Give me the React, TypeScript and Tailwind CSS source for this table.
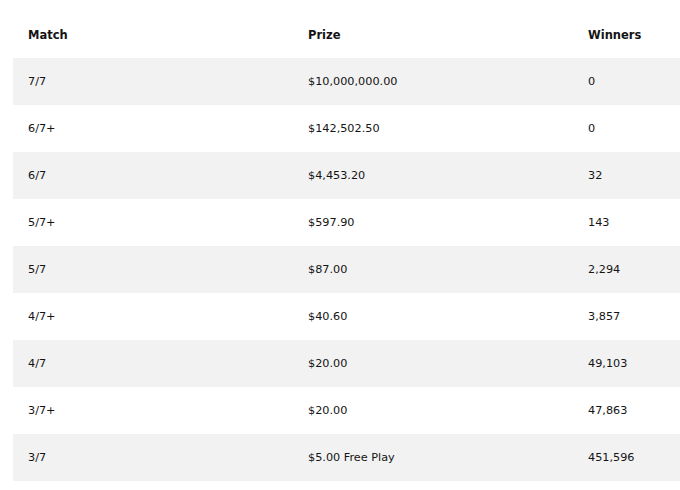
import React from "react";

const rows: [string, string, string][] = [
  ["7/7", "$10,000,000.00", "0"],
  ["6/7+", "$142,502.50", "0"],
  ["6/7", "$4,453.20", "32"],
  ["5/7+", "$597.90", "143"],
  ["5/7", "$87.00", "2,294"],
  ["4/7+", "$40.60", "3,857"],
  ["4/7", "$20.00", "49,103"],
  ["3/7+", "$20.00", "47,863"],
  ["3/7", "$5.00 Free Play", "451,596"],
];

export default function App() {
  return (
    <div className="w-[680px] h-[490px] overflow-hidden bg-white pt-[11px] pl-[13px] text-[#141414] [font-family:'DejaVu_Sans',sans-serif]">
      <table className="w-[840px] table-fixed border-collapse">
        <thead>
          <tr className="h-[47px]">
            <th className="w-[280px] pl-[15px] pt-[2px] text-left text-[11.5px] font-bold">Match</th>
            <th className="w-[280px] pl-[15px] pt-[2px] text-left text-[11.5px] font-bold">Prize</th>
            <th className="w-[280px] pl-[15px] pt-[2px] text-left text-[11.5px] font-bold">Winners</th>
          </tr>
        </thead>
        <tbody>
          {rows.map((r, i) => (
            <tr key={i} className={`h-[47px] ${i % 2 === 0 ? "bg-[#f2f2f2]" : "bg-white"}`}>
              <td className="pl-[15px] pt-[2px] text-[11.25px]">{r[0]}</td>
              <td className="pl-[15px] pt-[2px] text-[11.25px]">{r[1]}</td>
              <td className="pl-[15px] pt-[2px] text-[11.25px]">{r[2]}</td>
            </tr>
          ))}
        </tbody>
      </table>
    </div>
  );
}
